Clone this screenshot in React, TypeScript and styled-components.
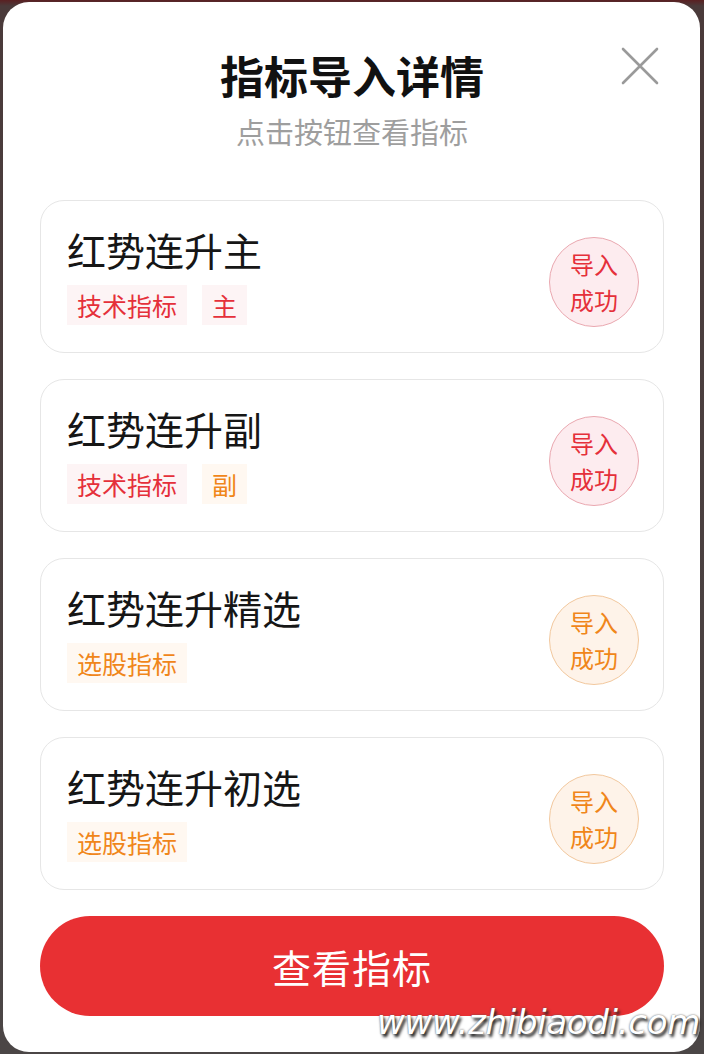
import React from 'react'
import styled, { createGlobalStyle } from 'styled-components'

const GlobalStyle = createGlobalStyle`
  html, body {
    margin: 0;
    padding: 0;
    background: #3d2b2c;
  }
  body {
    font-family: 'Noto Sans CJK SC', 'Noto Sans', sans-serif;
  }
`

type Tone = 'red' | 'orange'

const palette = {
  red: { text: '#e5303a', tagBg: '#fdf4f5', badgeBg: '#fdecef', border: '#eaa8b0' },
  orange: { text: '#f0861a', tagBg: '#fff8f1', badgeBg: '#fef3e9', border: '#f2c89e' },
}

const Screen = styled.div`
  position: relative;
  width: 704px;
  height: 1054px;
  overflow: hidden;
  background: linear-gradient(180deg, #5a2022 0, #4a3a3a 6px, #4b4646 100%);
  padding: 2px 4px 0 3px;
  box-sizing: border-box;
`

const Sheet = styled.div`
  position: relative;
  height: 1050px;
  background: #fff;
  border-radius: 26px;
  padding: 46px 36px 0 37px;
  box-sizing: border-box;
`

const Header = styled.div`
  display: flex;
  flex-direction: column;
  align-items: center;
  gap: 11px;
  margin-bottom: 51px;
`

const Title = styled.h1`
  margin: 0;
  font-size: 44px;
  line-height: 54px;
  font-weight: 700;
  color: #111;
`

const Subtitle = styled.p`
  margin: 0;
  font-size: 29px;
  line-height: 36px;
  color: #9e9e9e;
`

const CloseButton = styled.button`
  position: absolute;
  top: 44px;
  right: 40px;
  width: 40px;
  height: 40px;
  padding: 0;
  border: none;
  background: transparent;
  display: flex;
  align-items: center;
  justify-content: center;
`

const List = styled.div`
  display: flex;
  flex-direction: column;
  gap: 26px;
`

const Card = styled.div`
  display: flex;
  align-items: center;
  justify-content: space-between;
  height: 153px;
  box-sizing: border-box;
  padding: 0 24px 0 26px;
  border: 1px solid #e6e6e6;
  border-radius: 24px;
`

const Info = styled.div`
  display: flex;
  flex-direction: column;
  gap: 11px;
  padding-bottom: 5px;
`

const Name = styled.div`
  font-size: 39px;
  line-height: 50px;
  color: #161616;
`

const Tags = styled.div`
  display: flex;
  gap: 15px;
`

const Tag = styled.span<{ $tone: Tone }>`
  height: 40px;
  padding: 0 10px;
  font-size: 25px;
  line-height: 40px;
  color: ${(p) => palette[p.$tone].text};
  background: ${(p) => palette[p.$tone].tagBg};
`

const Badge = styled.div<{ $tone: Tone }>`
  width: 90px;
  height: 90px;
  box-sizing: border-box;
  border-radius: 50%;
  border: 1px solid ${(p) => palette[p.$tone].border};
  background: ${(p) => palette[p.$tone].badgeBg};
  color: ${(p) => palette[p.$tone].text};
  display: flex;
  align-items: center;
  justify-content: center;
  text-align: center;
  font-size: 24px;
  line-height: 36px;
  margin-top: 11px;
`

const ViewButton = styled.button`
  display: block;
  width: 100%;
  height: 100px;
  margin-top: 26px;
  border: none;
  border-radius: 50px;
  background: #e83033;
  color: #fff;
  font-family: 'Noto Sans CJK SC', 'Noto Sans', sans-serif;
  font-size: 39px;
  letter-spacing: 1px;
`

const Watermark = styled.div`
  position: absolute;
  right: 4px;
  bottom: 12px;
  font-family: 'DejaVu Sans', sans-serif;
  font-style: italic;
  font-size: 34px;
  letter-spacing: -0.3px;
  color: #fff;
  text-shadow: 2px 3px 3px #222, 0 0 2px #555;
`

type Item = { name: string; tags: { label: string; tone: Tone }[]; tone: Tone }

const items: Item[] = [
  { name: '红势连升主', tags: [{ label: '技术指标', tone: 'red' }, { label: '主', tone: 'red' }], tone: 'red' },
  { name: '红势连升副', tags: [{ label: '技术指标', tone: 'red' }, { label: '副', tone: 'orange' }], tone: 'red' },
  { name: '红势连升精选', tags: [{ label: '选股指标', tone: 'orange' }], tone: 'orange' },
  { name: '红势连升初选', tags: [{ label: '选股指标', tone: 'orange' }], tone: 'orange' },
]

const App: React.FC = () => {
  return (
    <Screen>
      <GlobalStyle />
      <Sheet>
        <CloseButton aria-label="关闭">
          <svg width="38" height="38" viewBox="0 0 38 38">
            <path d="M2 2 L36 36 M36 2 L2 36" stroke="#9a9a9a" strokeWidth="2.6" strokeLinecap="round" />
          </svg>
        </CloseButton>
        <Header>
          <Title>指标导入详情</Title>
          <Subtitle>点击按钮查看指标</Subtitle>
        </Header>
        <List>
          {items.map((item) => (
            <Card key={item.name}>
              <Info>
                <Name>{item.name}</Name>
                <Tags>
                  {item.tags.map((t) => (
                    <Tag key={t.label} $tone={t.tone}>
                      {t.label}
                    </Tag>
                  ))}
                </Tags>
              </Info>
              <Badge $tone={item.tone}>
                导入
                <br />
                成功
              </Badge>
            </Card>
          ))}
        </List>
        <ViewButton>查看指标</ViewButton>
      </Sheet>
      <Watermark>www.zhibiaodi.com</Watermark>
    </Screen>
  )
}

export default App
